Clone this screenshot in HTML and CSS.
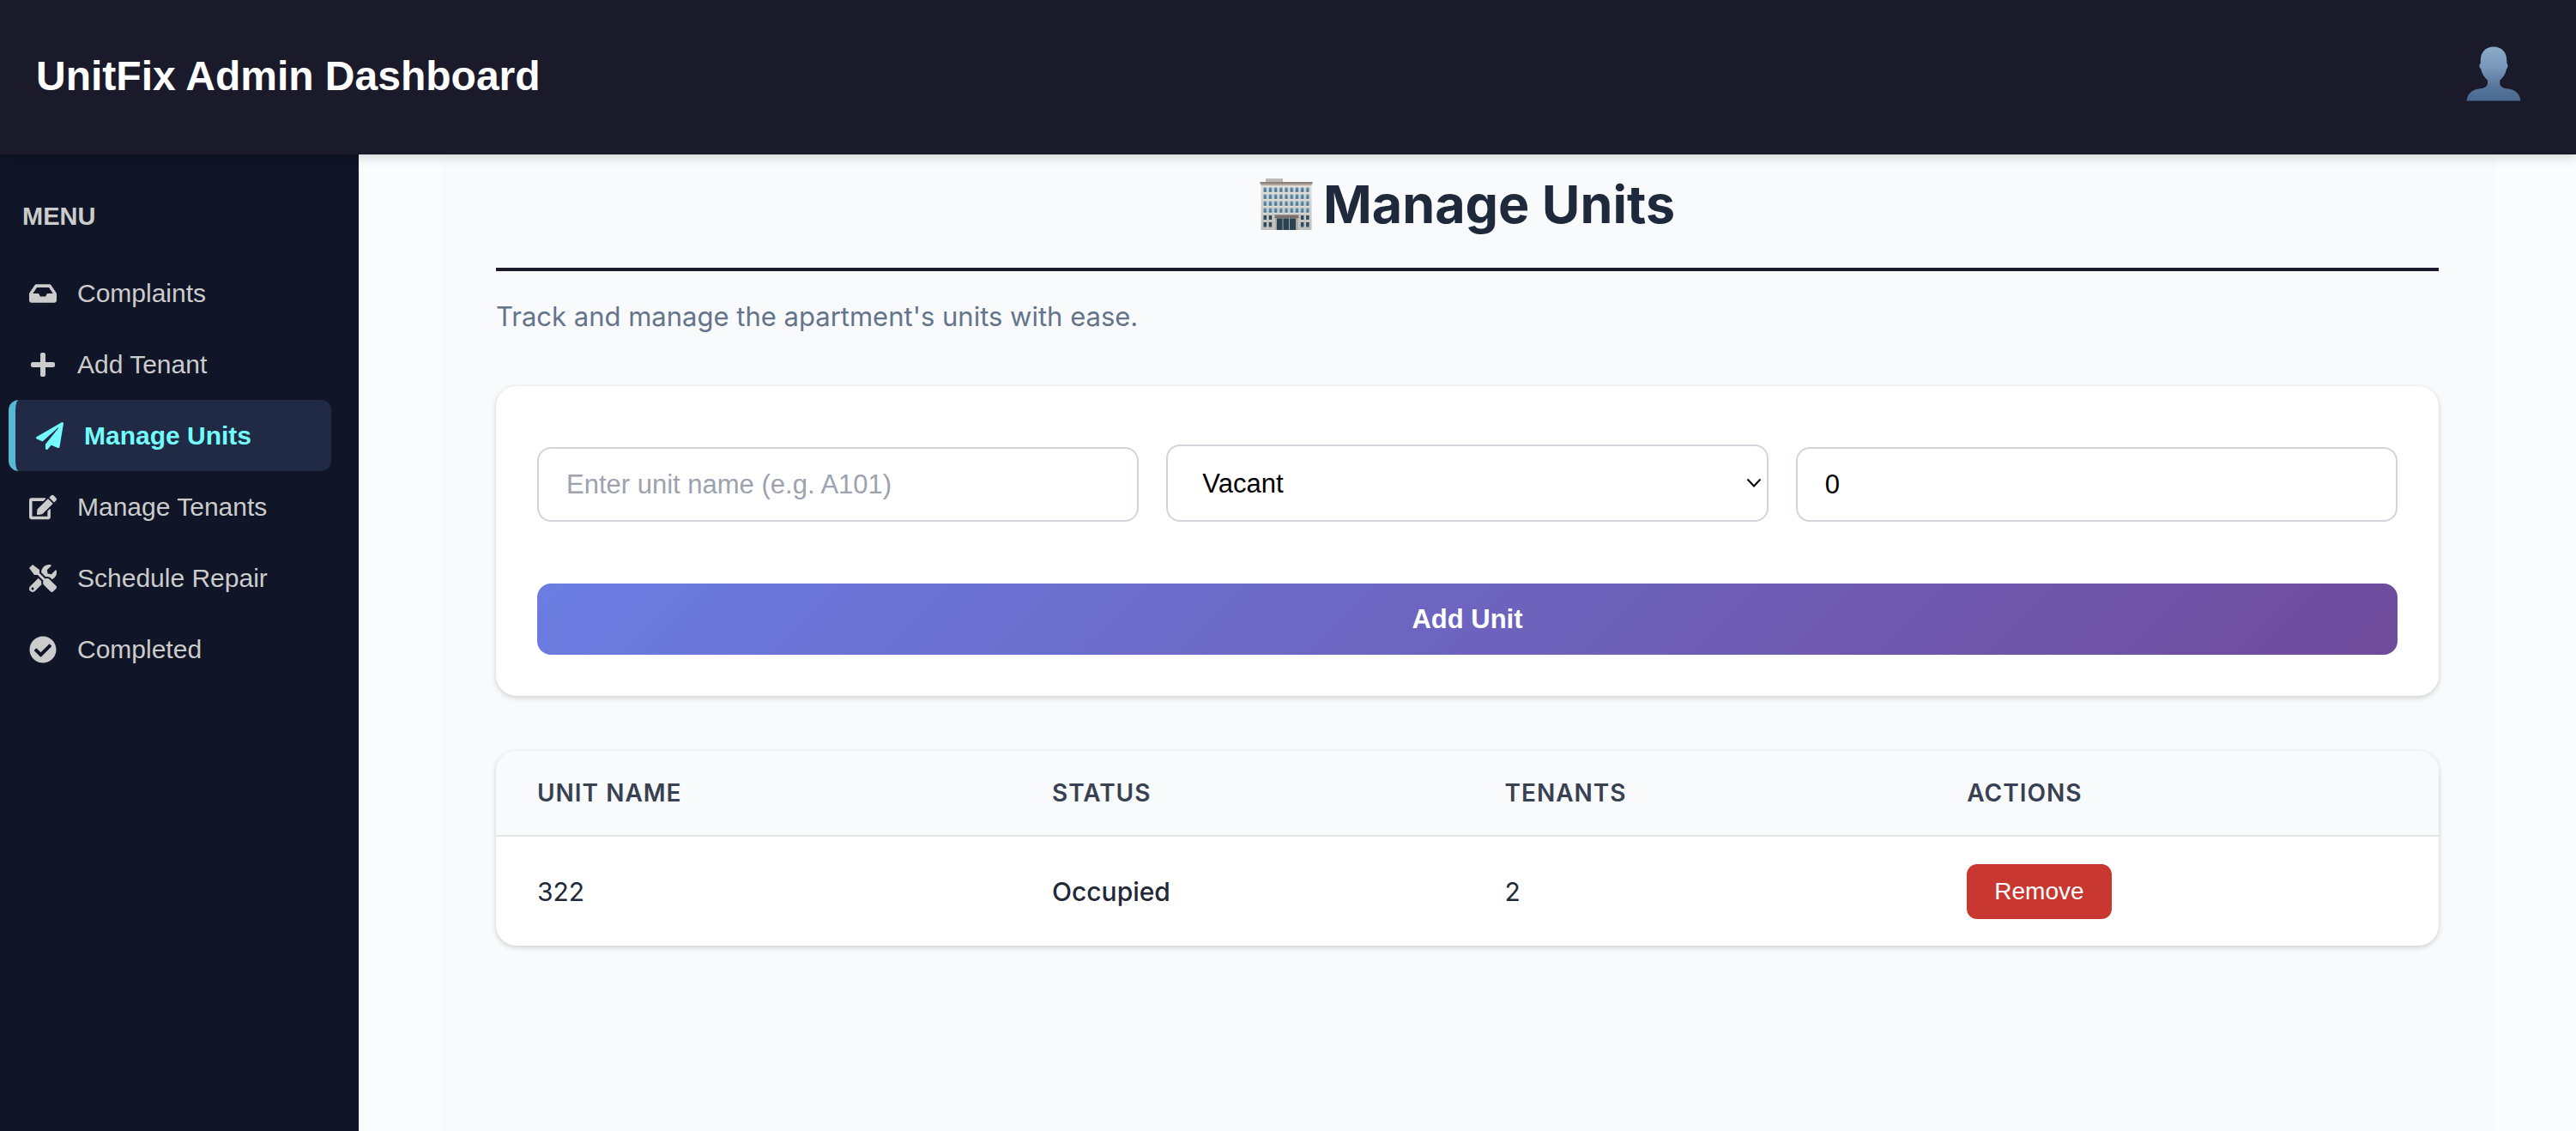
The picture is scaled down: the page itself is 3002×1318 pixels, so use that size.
FILE: index.html
```html
<!DOCTYPE html>
<html lang="en">
<head>
<meta charset="utf-8">
<meta name="viewport" content="width=device-width, initial-scale=1">
<title>UnitFix Admin Dashboard</title>
<link rel="stylesheet" href="styles.css">
</head>
<body>
<header class="topbar">
  <h1 class="brand">UnitFix Admin Dashboard</h1>
  <button class="profile" type="button" aria-label="Profile">
    <svg class="profile-icon" viewBox="0 0 64 64" aria-hidden="true">
      <defs>
        <linearGradient id="skin" x1="0" y1="0" x2="0" y2="1">
          <stop offset="0" stop-color="#8aabc9"/>
          <stop offset=".35" stop-color="#7b9abb"/>
          <stop offset=".75" stop-color="#56759a"/>
          <stop offset="1" stop-color="#4a6890"/>
        </linearGradient>
      </defs>
      <path fill="url(#skin)" d="M32 .5C22.500 .5 16.800 7 16.800 16.500V20C15 20.500 15 25 17.200 26.500 18.200 32 21.500 36.500 25 39.500V43.500C24.500 47.500 20 49 15 49.500 6.500 50.500 1.500 55.500 .5 63.500H63.500C62.500 55.500 57.500 50.500 49 49.500 44 49 39.500 47.500 39.300 43.500V39.500C43 36.500 46 32 47 26.500 49 25 49 20.500 47.300 20V16.500C47.300 7 41.500 .5 32 .5Z"/>
    </svg>
  </button>
</header>

<div class="layout">
  <nav class="sidebar" aria-label="Menu">
    <h2 class="menu-title">MENU</h2>
    <ul class="menu">
      <li><a class="menu-link" href="#complaints">
        <svg class="menu-icon" viewBox="0 0 576 512" aria-hidden="true"><path d="M567.938 243.908L462.250 85.374A48.003 48.003 0 0 0 422.311 64H153.689a48 48 0 0 0-39.938 21.374L8.062 243.908A47.994 47.994 0 0 0 0 270.533V400c0 26.510 21.490 48 48 48h480c26.510 0 48-21.490 48-48V270.533a47.994 47.994 0 0 0-8.062-26.625zM162.252 128h251.497l85.333 128H376l-32 64H232l-32-64H76.918l85.334-128z"/></svg>
        Complaints</a></li>
      <li><a class="menu-link" href="#add-tenant">
        <svg class="menu-icon" viewBox="0 0 448 512" aria-hidden="true"><path d="M416 208H272V64c0-17.670-14.330-32-32-32h-32c-17.670 0-32 14.330-32 32v144H32c-17.670 0-32 14.330-32 32v32c0 17.670 14.330 32 32 32h144v144c0 17.670 14.330 32 32 32h32c17.670 0 32-14.330 32-32V304h144c17.670 0 32-14.330 32-32v-32c0-17.670-14.330-32-32-32z"/></svg>
        Add Tenant</a></li>
      <li><a class="menu-link menu-link-active" href="#manage-units" aria-current="page">
        <svg class="menu-icon" viewBox="0 0 512 512" aria-hidden="true"><path d="M476 3.200L12.500 270.600c-18.100 10.400-15.800 35.600 2.200 43.200L121 358.400l287.300-253.200c5.500-4.900 13.300 2.600 8.600 8.300L176 407v80.500c0 23.600 28.500 32.900 42.500 15.800L282 426l124.600 52.200c14.200 6 30.400-2.900 33-18.200l72-432C515 7.800 493.300-6.800 476 3.200z"/></svg>
        Manage Units</a></li>
      <li><a class="menu-link" href="#manage-tenants">
        <svg class="menu-icon" viewBox="0 0 576 512" aria-hidden="true"><path d="M402.600 83.200l90.200 90.200c3.800 3.800 3.800 10 0 13.800L274.400 405.600l-92.800 10.300c-12.400 1.400-22.900-9.100-21.500-21.500l10.300-92.800L388.800 83.200c3.800-3.800 10-3.800 13.800 0zm162-22.900l-48.800-48.800c-15.200-15.200-39.900-15.200-55.200 0l-35.400 35.400c-3.800 3.800-3.800 10 0 13.800l90.200 90.200c3.800 3.800 10 3.800 13.800 0l35.400-35.400c15.200-15.300 15.200-40 0-55.200zM384 346.200V448H64V128h229.800c3.200 0 6.200-1.300 8.500-3.500l40-40c7.600-7.600 2.200-20.500-8.500-20.500H48C21.500 64 0 85.500 0 112v352c0 26.500 21.500 48 48 48h352c26.500 0 48-21.500 48-48V306.200c0-10.700-12.900-16-20.500-8.500l-40 40c-2.200 2.300-3.500 5.300-3.500 8.500z"/></svg>
        Manage Tenants</a></li>
      <li><a class="menu-link" href="#schedule-repair">
        <svg class="menu-icon" viewBox="0 0 512 512" aria-hidden="true"><path d="M501.100 395.700L384 278.600c-23.100-23.100-57.600-27.600-85.400-13.900L192 158.100V96L64 0 0 64l96 128h62.100l106.600 106.600c-13.600 27.800-9.200 62.300 13.900 85.400l117.100 117.100c14.600 14.600 38.200 14.600 52.700 0l52.700-52.700c14.500-14.600 14.500-38.200 0-52.700zM331.700 225c28.300 0 54.900 11 74.900 31l19.400 19.400c15.800-6.900 30.800-16.500 43.800-29.500 37.100-37.100 49.700-89.300 37.900-136.700-2.200-9-13.500-12.100-20.100-5.500l-74.400 74.400-67.900-11.300L334 98.900l74.400-74.400c6.600-6.600 3.400-17.900-5.700-20.200-47.400-11.700-99.600.9-136.600 37.900-28.500 28.500-41.900 66.100-41.200 103.600l82.100 82.100c8.100-1.900 16.500-2.900 24.700-2.900zm-103.900 82l-56.700-56.700L18.700 402.800c-25 25-25 65.500 0 90.500s65.500 25 90.500 0l123.600-123.600c-7.600-19.900-9.900-41.600-5-62.700zM64 472c-13.200 0-24-10.800-24-24 0-13.300 10.700-24 24-24s24 10.700 24 24c0 13.200-10.700 24-24 24z"/></svg>
        Schedule Repair</a></li>
      <li><a class="menu-link" href="#completed">
        <svg class="menu-icon" viewBox="0 0 512 512" aria-hidden="true"><path d="M504 256c0 136.967-111.033 248-248 248S8 392.967 8 256 119.033 8 256 8s248 111.033 248 248zM227.314 387.314l184-184c6.248-6.248 6.248-16.379 0-22.627l-22.627-22.627c-6.248-6.249-16.379-6.249-22.628 0L216 308.118l-70.059-70.059c-6.248-6.248-16.379-6.248-22.628 0l-22.627 22.627c-6.248 6.248-6.248 16.379 0 22.627l104 104c6.249 6.249 16.379 6.249 22.628.001z"/></svg>
        Completed</a></li>
    </ul>
  </nav>

  <main class="content">
    <div class="container">
      <h2 class="page-title">
        <svg class="title-icon" viewBox="0 0 62 62" aria-hidden="true">
          <defs>
            <linearGradient id="wall" x1="0" y1="0" x2="0" y2="1">
              <stop offset="0" stop-color="#e2dfda"/>
              <stop offset="1" stop-color="#bdbdbb"/>
            </linearGradient>
            <linearGradient id="glass" x1="0" y1="0" x2="0" y2="1">
              <stop offset="0" stop-color="#5f8fb0"/>
              <stop offset="1" stop-color="#44708f"/>
            </linearGradient>
            <pattern id="windows" x="4" y="11" width="6.200" height="8" patternUnits="userSpaceOnUse">
              <path fill="#e4e2de" d="M0 0H4.500V7H0z"/>
              <path fill="url(#glass)" d="M.5 .5H4V5.800H.5z"/>
            </pattern>
          </defs>
          <path fill="#bdbab6" d="M7 1H27V6H7z"/>
          <path fill="url(#wall)" d="M1.500 7H60.500V61H1.500z"/>
          <path fill="#8b807a" d="M.5 5H61.500V7.500H.5z"/>
          <path fill="#aaa19a" d="M1.500 7.500H60.500V9H1.500z"/>
          <path fill="url(#windows)" d="M4 11H58.500V43H4z"/>
          <path fill="#2f4a5c" d="M4.500 44H8V49H4.500zM10.700 44H14.200V49H10.700zM47.900 44H51.400V49H47.900zM54.100 44H57.600V49H54.100zM4.500 52H8V57.500H4.500zM10.700 52H14.200V57.500H10.700zM47.900 52H51.400V57.500H47.900zM54.100 52H57.600V57.500H54.100z"/>
          <path fill="#7b716c" d="M17.500 43.500H45.500V47.500H17.500z"/>
          <path fill="#a5a29f" d="M18.500 47.500H44.500V61H18.500z"/>
          <path fill="#2a4252" d="M20 47.500H26.500V61H20zM27.500 47.500H34V61H27.500zM35 47.500H42V61H35z"/>
        </svg>
        Manage Units
      </h2>
      <p class="lead">Track and manage the apartment's units with ease.</p>

      <form class="card unit-form">
        <div class="fields">
          <input class="field" type="text" placeholder="Enter unit name (e.g. A101)" aria-label="Unit name">
          <div class="select-wrap">
            <select class="field field-select" aria-label="Status">
              <option>Vacant</option>
              <option>Occupied</option>
            </select>
            <svg class="chevron" viewBox="0 0 18 12" aria-hidden="true"><path d="M1.500 1.500L9 9.500L16.500 1.500"/></svg>
          </div>
          <input class="field" type="number" value="0" min="0" aria-label="Tenants">
        </div>
        <button class="add-button" type="button">Add Unit</button>
      </form>

      <div class="card table-card">
        <table class="units">
          <colgroup><col class="col-name"><col class="col-status"><col class="col-tenants"><col></colgroup>
          <thead>
            <tr><th scope="col">UNIT NAME</th><th scope="col">STATUS</th><th scope="col">TENANTS</th><th scope="col">ACTIONS</th></tr>
          </thead>
          <tbody>
            <tr><td>322</td><td class="status">Occupied</td><td>2</td><td><button class="remove-button" type="button">Remove</button></td></tr>
          </tbody>
        </table>
      </div>
    </div>
  </main>
</div>
</body>
</html>
```
FILE: styles.css
```css
* {
  box-sizing: border-box;
}

body {
  margin: 0;
  min-height: 100vh;
  display: flex;
  flex-direction: column;
  background: #fbfcfe;
  color: #1e293b;
  font-family: Inter, "Liberation Sans", sans-serif;
  font-size: 30px;
}

.topbar {
  position: relative;
  z-index: 1;
  display: flex;
  align-items: center;
  justify-content: space-between;
  height: 180px;
  padding: 0 64px 2px 42px;
  background: #1a1a2b;
  box-shadow: 0 4px 12px rgba(0, 0, 0, 0.15);
}

.brand {
  margin: 0;
  color: #fff;
  font: bold 48px/56px "Liberation Sans", Arial, sans-serif;
}

.profile {
  padding: 0;
  border: 0;
  background: none;
  cursor: pointer;
}

.profile-icon {
  display: block;
  width: 64px;
  height: 64px;
  margin-bottom: 6px;
}

.layout {
  flex: 1;
  display: flex;
}

.sidebar {
  flex: none;
  width: 418px;
  padding: 56px 32px 40px 10px;
  background: #101527;
  color: #ccc;
  font-family: "Liberation Sans", Arial, sans-serif;
}

.menu-title {
  margin: 0 0 32px;
  padding-left: 16px;
  font-size: 29px;
  line-height: 32px;
}

.menu {
  margin: 0;
  padding: 0;
  list-style: none;
}

.menu-link {
  display: flex;
  align-items: center;
  gap: 24px;
  height: 83px;
  padding-left: 24px;
  border-radius: 12px;
  color: #ccc;
  font-size: 30px;
  text-decoration: none;
}

.menu-link-active {
  border-left: 8px solid #56b8d3;
  background: #202a44;
  color: #74fbfd;
  font-weight: bold;
}

.menu-icon {
  width: 32px;
  height: 32px;
  fill: currentColor;
}

.content {
  flex: 1;
  min-width: 0;
  padding: 0 96px;
}

.container {
  min-height: 100%;
  padding: 20px 64px;
  background: #f9fafc;
}

.page-title {
  display: flex;
  align-items: center;
  justify-content: center;
  gap: 12px;
  margin: 0 0 28px;
  padding-bottom: 36px;
  border-bottom: 4px solid #1a1a2b;
  font-size: 61px;
  font-weight: 700;
  line-height: 76px;
}

.title-icon {
  width: 62px;
  height: 62px;
}

.lead {
  margin: 0 0 56px;
  color: #64748b;
  font-size: 31px;
  line-height: 50px;
}

.card {
  border-radius: 24px;
  background: #fff;
  box-shadow: 0 2px 6px rgba(0, 0, 0, 0.18);
}

.unit-form {
  margin-bottom: 64px;
  padding: 68px 48px 48px;
}

.fields {
  display: grid;
  grid-template-columns: repeat(3, 1fr);
  align-items: end;
  gap: 32px;
  margin-bottom: 72px;
}

.field {
  width: 100%;
  height: 87px;
  padding: 0 32px;
  border: 2px solid #d1d5db;
  border-radius: 16px;
  outline: 0;
  background: #fff;
  color: #000;
  font: 31px "Liberation Sans", Arial, sans-serif;
}

.field::placeholder {
  color: #9ca3af;
}

.field[type="number"] {
  appearance: textfield;
}

.select-wrap {
  display: grid;
  align-items: center;
}

.field-select {
  grid-area: 1 / 1;
  height: 90px;
  padding: 0 40px;
  appearance: none;
}

.chevron {
  grid-area: 1 / 1;
  justify-self: end;
  width: 18px;
  height: 12px;
  margin-right: 8px;
  fill: none;
  stroke: #000;
  stroke-width: 2;
  pointer-events: none;
}

.add-button {
  display: block;
  width: 100%;
  height: 83px;
  border: 0;
  border-radius: 16px;
  background: linear-gradient(135deg, #6b7de2, #6f4b9b);
  color: #fff;
  font: bold 31px "Liberation Sans", Arial, sans-serif;
  cursor: pointer;
}

.table-card {
  overflow: hidden;
}

.units {
  width: 100%;
  border-collapse: collapse;
  table-layout: fixed;
  text-align: left;
}

.col-name {
  width: 26.5%;
}

.col-status {
  width: 23.3%;
}

.col-tenants {
  width: 23.8%;
}

.units th {
  height: 99px;
  padding: 0 48px;
  border-bottom: 2px solid #e5e7eb;
  background: #f9fafc;
  color: #374151;
  font-size: 28px;
  font-weight: 600;
  letter-spacing: 1px;
}

.units td {
  height: 128px;
  padding: 0 48px;
  color: #1f2937;
  font-size: 30px;
}

.units .status {
  font-weight: 500;
}

.remove-button {
  display: block;
  height: 64px;
  padding: 0 32px;
  border: 0;
  border-radius: 12px;
  background: #c83830;
  color: #fff;
  font: 28px "Liberation Sans", Arial, sans-serif;
  cursor: pointer;
}
```
